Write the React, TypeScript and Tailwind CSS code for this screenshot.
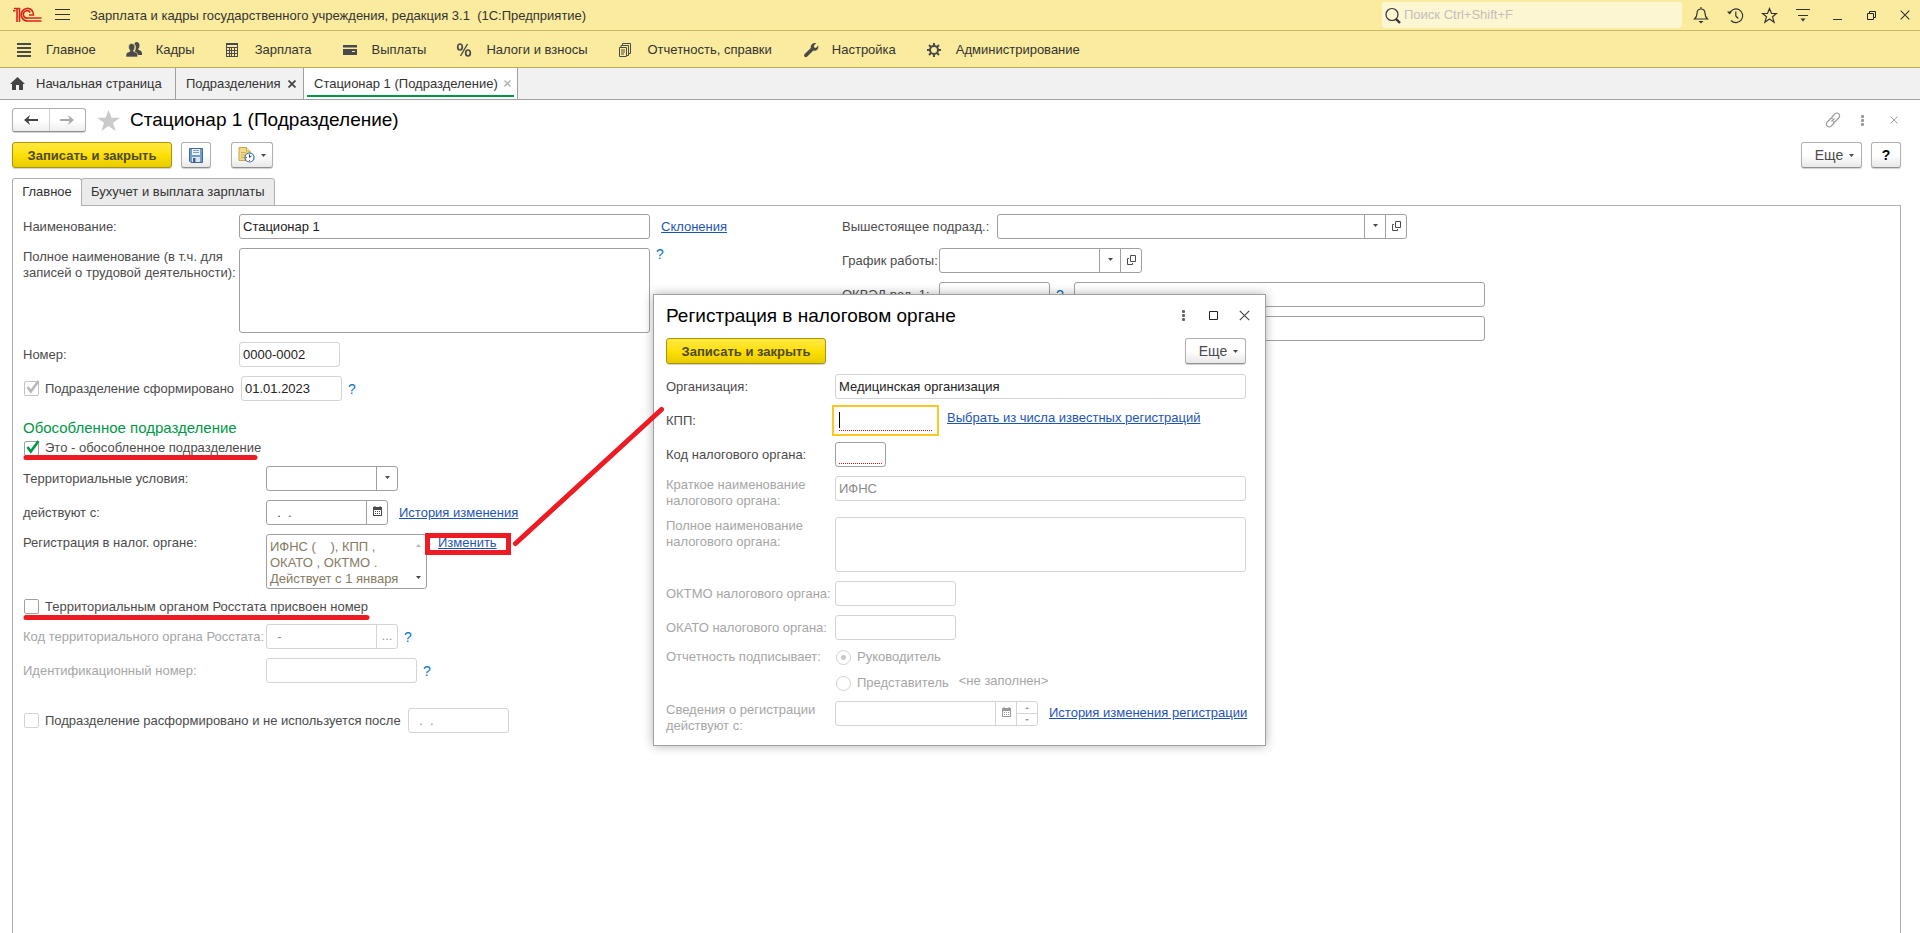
import React from 'react';

const SECTIONS = [
    { label: 'Главное', icon: 'lines' },
    { label: 'Кадры', icon: 'people' },
    { label: 'Зарплата', icon: 'calc' },
    { label: 'Выплаты', icon: 'card' },
    { label: 'Налоги и взносы', icon: 'percent' },
    { label: 'Отчетность, справки', icon: 'docs' },
    { label: 'Настройка', icon: 'wrench' },
    { label: 'Администрирование', icon: 'gear' },
];

const SectionIcon: React.FC<{ name: string }> = ({ name }) => (
    <svg width="18" height="18" viewBox="0 0 18 18" fill="#4a4a4a" className="shrink-0">
        {name === 'lines' && <path d="M1 2h14v2H1zM1 6h14v2H1zM1 10h14v2H1zM1 14h14v2H1z" />}
        {name === 'people' && (
            <>
                <path d="M10.500 1c2 0 3 1.400 3 3.400 0 1.600-.6 2.600-1.200 3.300v1c1.500.7 3.700 1.200 3.700 3.300v2h-4.500c-.6-1.800-2-2.500-3.300-3 1.200-1.200 1.600-2.600 1.600-4.400 0-1.500-.5-2.700-1.500-3.600.5-1.200 1.200-2 2.200-2z" />
                <path d="M5.700 2.500c2 0 3.200 1.400 3.200 3.500 0 1.600-.6 2.700-1.300 3.400v1c1.500.7 4.100 1.100 4.100 3.400V16H0v-2.200c0-2.300 2.400-2.700 3.900-3.400v-1C3.200 8.700 2.600 7.600 2.600 6c0-2.100 1.100-3.500 3.100-3.500z" stroke="#fbeb9e" strokeWidth=".6" />
            </>
        )}
        {name === 'calc' && (
            <path fillRule="evenodd" d="M1 2h12v14H1zM2 4v2h10V4zM2 7v2h2V7zM5 7v2h1V7zM7 7v2h2V7zM10 7v2h2V7zM2 10v2h2v-2zM5 10v2h1v-2zM7 10v2h2v-2zM10 10v2h2v-2zM2 13v2h2v-2zM5 13v2h1v-2zM7 13v2h2v-2zM10 13v2h2v-2z" />
        )}
        {name === 'card' && <path d="M1 4h14v2.500H1zM1 8h14v6H1zM10 10v1h3v-1z" fillRule="evenodd" />}
        {name === 'percent' && (
            <g fill="none" stroke="#4a4a4a">
                <ellipse cx="4" cy="6" rx="2.300" ry="3" strokeWidth="1.700" />
                <ellipse cx="12" cy="12" rx="2.300" ry="3" strokeWidth="1.700" />
                <path d="M11.500 3l-7 12" strokeWidth="1.400" />
            </g>
        )}
        {name === 'docs' && (
            <g fill="none" stroke="#4a4a4a">
                <path d="M4.500 4.500V2.500h8v10h-1.500M3 6V4.500h7.500v10H9" />
                <path d="M1.500 6.500h7v9h-7zM3 9h4M3 11h4M3 13h3" />
            </g>
        )}
        {name === 'wrench' && (
            <path d="M11.500 2.200c1-.3 2-.2 2.600.1L11.800 4.700l.4 1.800 1.800.4 2.100-2.300c.5 1.400.2 3.100-.9 4.100-1.100 1-2.600 1.200-3.800.7L5.300 15.600c-.8.8-2 .9-2.700.2-.8-.8-.7-1.900.1-2.700L8.800 7C8.300 4.800 9.500 2.700 11.500 2.200z" />
        )}
        {name === 'gear' && (
            <g fill="none" stroke="#4a4a4a">
                <circle cx="8" cy="9" r="4" strokeWidth="2" />
                <path d="M8 2v3M8 13v3M1 9h3M12 9h3M3 4l2 2M11 12l2 2M13 4l-2 2M5 12l-2 2" strokeWidth="2" />
            </g>
        )}
    </svg>
);

const Logo = () => (
    <svg width="30" height="16" viewBox="0 0 30 16" fill="none" stroke="#d9251d" aria-label="1С">
        <path d="M1 3.700h2.500M5 1v14M7.500 1v14M2 1.500h6" strokeWidth="1.600" />
        <path d="M20.500 3.800A6.300 6.300 0 1 0 15.800 14h13.700" strokeWidth="1.600" />
        <path d="M18.300 5.500A3.700 3.700 0 1 0 15.800 11h13.700" strokeWidth="1.600" />
        <path d="M17 8h4.500c0-2-.6-3.400-1.500-4.500" strokeWidth="1.500" />
    </svg>
);

const Caret = ({ className = '' }: { className?: string }) => (
    <svg width="5" height="3" viewBox="0 0 5 3" fill="currentColor" className={className}>
        <path d="M0 0h5L2.500 3z" />
    </svg>
);

const OpenIcon = () => (
    <svg width="9" height="10" viewBox="0 0 9 10" fill="none" stroke="#4a4a4a">
        <path d="M3.500.5h5v6h-5zM2 3.500H.5v6h5V8" />
    </svg>
);

const CalendarIcon = ({ className = '' }: { className?: string }) => (
    <svg width="9" height="11" viewBox="0 0 9 11" fill="currentColor" className={className}>
        <path fillRule="evenodd" d="M0 1h1.500V0h1v1h4V0h1v1H9v9H0zM1 4v5h7V4zM2 5h1v1H2zM4 5h1v1H4zM6 5h1v1H6zM2 7h1v1H2zM4 7h1v1H4zM6 7h1v1H6z" />
    </svg>
);

const Dots = ({ className = '' }: { className?: string }) => (
    <svg width="3" height="11" viewBox="0 0 3 11" fill="currentColor" className={className}>
        <rect width="3" height="3" rx="1" />
        <rect y="4" width="3" height="3" rx="1" />
        <rect y="8" width="3" height="3" rx="1" />
    </svg>
);

const Cross = ({ size, className = '', width = 1.2 }: { size: number; className?: string; width?: number }) => (
    <svg width={size} height={size} viewBox="0 0 10 10" stroke="currentColor" strokeWidth={width} className={className}>
        <path d="M.7.7l8.600 8.600M9.300.7L.7 9.300" />
    </svg>
);

const inputBase = 'h-[25px] rounded-[3px] border bg-white px-[3px] outline-none';
const greyButton =
    'h-[26px] rounded-[3px] border border-[#b0b0b0] border-b-[#8f8f8f] bg-gradient-to-b from-white from-50% to-[#e8e8e8] shadow-[0_1px_1px_#d0d0d0] flex items-center justify-center';
const yellowButton =
    'h-[26px] w-40 rounded-[3px] border border-[#a8940a] bg-gradient-to-b from-[#ffe83c] via-[#ffe000] to-[#e8cb00] pt-px text-[13px] font-bold text-[#4d4a2a] shadow-[0_1px_1px_#d0d0d0]';
const link = 'whitespace-nowrap text-[#1e55b5] underline underline-offset-1';

const Help = ({ className = '' }: { className?: string }) => (
    <button type="button" aria-label="Справка" className={`text-sm leading-3 text-[#0a74c0] ${className}`}>?</button>
);

interface CheckProps {
    id: string;
    label: string;
    checked?: boolean;
    disabled?: boolean;
    boxClass?: string;
}

const Check: React.FC<CheckProps> = ({ id, label, checked = false, disabled = false, boxClass = 'border-[#a0a0a0]' }) => (
    <div className="flex items-center gap-1.5">
        <span className="relative flex">
            <input
                id={id}
                type="checkbox"
                defaultChecked={checked}
                disabled={disabled}
                className={`ml-px size-[15px] appearance-none rounded-[2px] border bg-white ${boxClass}`}
            />
            {checked && (
                <svg width="16" height="16" viewBox="0 0 16 16" fill="none" className={`pointer-events-none absolute -top-px left-px ${disabled ? 'text-[#b8b8b8]' : 'text-[#009846]'}`}>
                    <path d="M3.500 7l3.300 4.500L14.500 1" stroke="currentColor" strokeWidth="2.600" />
                </svg>
            )}
        </span>
        <label htmlFor={id}>{label}</label>
    </div>
);

interface RowProps {
    id: string;
    label: React.ReactNode;
    labelWidth?: string;
    muted?: boolean;
    top?: boolean;
    children: React.ReactNode;
}

const Row: React.FC<RowProps> = ({ id, label, labelWidth = '', muted = false, top = false, children }) => (
    <div className={`flex ${top ? 'items-start' : 'items-center'}`}>
        <label htmlFor={id} className={`shrink-0 whitespace-nowrap ${labelWidth} ${top ? '-mb-px pt-px' : ''} ${muted ? 'text-[#a6a6a6]' : ''}`}>{label}</label>
        {children}
    </div>
);

interface ComboProps {
    id: string;
    width: string;
    value?: string;
    muted?: boolean;
    buttons: { label: string; icon: React.ReactNode }[];
}

// text box with a strip of buttons on its right edge
const Combo: React.FC<ComboProps> = ({ id, width, value = '', muted = false, buttons }) => (
    <div className={`flex h-[25px] overflow-hidden rounded-[3px] border bg-white ${width} ${muted ? 'border-[#d4d4d4] text-[#8a8a8a]' : 'border-[#a0a0a0]'}`}>
        <input id={id} defaultValue={value} disabled={muted} className="min-w-0 flex-1 px-[3px] outline-none" />
        {buttons.map((b) => (
            <button
                key={b.label}
                type="button"
                aria-label={b.label}
                className={`flex w-[21px] items-center justify-center border-l pb-0.5 text-[#4a4a4a] ${muted ? 'border-[#d4d4d4]' : 'border-[#a0a0a0]'}`}
            >
                {b.icon}
            </button>
        ))}
    </div>
);

const TitleBar = () => (
    <header className="flex h-[31px] items-center border-b border-[#c9b96a] bg-[#fbeb9e] text-[#333]">
        <div className="ml-3 flex w-[43px]"><Logo /></div>
        <button type="button" aria-label="Меню" className="mr-5">
            <svg width="15" height="12" viewBox="0 0 15 12" stroke="#333"><path d="M0 .5h15M0 5.500h15M0 10.500h15" /></svg>
        </button>
        <h1 className="flex-1 whitespace-pre pt-px">Зарплата и кадры государственного учреждения, редакция 3.1  (1С:Предприятие)</h1>
        <label className="flex h-[26px] w-[300px] items-center rounded-[3px] bg-[#fdf6d3] pl-[3px]">
            <svg width="16" height="17" viewBox="0 0 16 17" fill="none" stroke="#333">
                <circle cx="7" cy="7.500" r="6" strokeWidth="1.200" />
                <path d="M11 12l4 4" strokeWidth="2.400" />
            </svg>
            <input placeholder="Поиск Ctrl+Shift+F" aria-label="Поиск" className="ml-[3px] min-w-0 flex-1 outline-none placeholder:text-[#c4c0b8]" />
        </label>
        <div className="flex [&>button]:flex [&>button]:h-6 [&>button]:w-[34px] [&>button]:items-center [&>button]:justify-center [&>button]:pl-1">
            <button type="button" aria-label="Уведомления">
                <svg width="16" height="18" viewBox="0 0 16 18" fill="none" stroke="#333">
                    <path d="M1.500 13C3.500 11 4 9.500 4 7.500 4 4.800 5.500 3 8 3s4 1.800 4 4.500c0 2 .5 3.500 2.500 5.500zM8 3V1" strokeWidth="1.200" />
                    <path d="M5.500 15h5L8 17.500z" fill="#333" stroke="none" />
                </svg>
            </button>
            <button type="button" aria-label="История">
                <svg width="17" height="17" viewBox="0 0 17 17" fill="none" stroke="#333" strokeWidth="1.200">
                    <path d="M2.500 6.500A6.800 6.800 0 1 1 4 13.500M8.800 4.500v4.500l2.500 2.500" />
                    <path d="M0 4.500l2.600 3L5 4.500z" fill="#333" stroke="none" />
                </svg>
            </button>
            <button type="button" aria-label="Избранное">
                <svg width="17" height="17" viewBox="0 0 17 17" fill="none" stroke="#333" strokeWidth="1.200">
                    <path d="M8.500 1.500l2 5h5l-4 3.300 1.600 5.400-4.600-3.200-4.600 3.200 1.600-5.400-4-3.300h5z" />
                </svg>
            </button>
            <button type="button" aria-label="Настройки">
                <svg width="14" height="14" viewBox="0 0 14 14" stroke="#333"><path d="M0 1.500h14M2 7.500h10" strokeWidth="1.200" /><path d="M4.500 10.500h5l-2.500 3z" fill="#333" stroke="none" /></svg>
            </button>
            <button type="button" aria-label="Свернуть">
                <svg width="9" height="9" viewBox="0 0 9 9" stroke="#333"><path d="M0 8.500h9" /></svg>
            </button>
            <button type="button" aria-label="Восстановить">
                <svg width="9" height="9" viewBox="0 0 9 9" fill="none" stroke="#222"><path d="M.5 2.500h6v6h-6zM2.500 2V.5h6v6H7" /></svg>
            </button>
            <button type="button" aria-label="Закрыть"><Cross size={10} width={1.1} /></button>
        </div>
    </header>
);

const SectionBar = () => (
    <nav className="flex h-[37px] items-center gap-[30px] border-b border-[#b9ad5a] bg-[#fbeb9e] pl-4 pt-0.5 text-[#333]">
        {SECTIONS.map((s) => (
            <a key={s.label} href="#" className="flex items-center gap-3 whitespace-nowrap">
                <SectionIcon name={s.icon} />
                {s.label}
            </a>
        ))}
    </nav>
);

const OpenTabs = () => (
    <nav className="flex h-8 border-b border-[#a0a0a0] bg-[#f1f1f1] text-[#333]">
        <a href="#" className="flex w-44 items-center gap-[11px] border-r border-[#a0a0a0] pl-2.5">
            <svg width="15" height="13" viewBox="0 0 15 13" fill="#444"><path d="M7.500 0L15 7h-2v6H9V8H6v5H2V7H0z" /></svg>
            Начальная страница
        </a>
        <div className="flex w-32 items-center justify-between border-r border-[#a0a0a0] pl-2.5 pr-[7px]">
            <a href="#">Подразделения</a>
            <button type="button" aria-label="Закрыть вкладку"><Cross size={8} width={2.2} className="text-[#444]" /></button>
        </div>
        <div className="flex w-[214px] border-r border-[#a0a0a0] bg-white px-[3px] pb-0.5">
            <div className="flex flex-1 items-center justify-between border-b-2 border-[#009846] pl-[7px] pr-[3px] pt-1">
                <a href="#">Стационар 1 (Подразделение)</a>
                <button type="button" aria-label="Закрыть вкладку"><Cross size={7} width={2} className="text-[#b0b0b0]" /></button>
            </div>
        </div>
    </nav>
);

const FormHeader = () => (
    <div className="pl-3 pr-[19px]">
        <div className="flex h-6 items-center">
            <div className="flex h-6 w-[74px] rounded-[3px] border border-[#b0b0b0] border-b-[#8f8f8f] bg-gradient-to-b from-white from-50% to-[#eee] shadow-[0_1px_1px_#d0d0d0]">
                <button type="button" aria-label="Назад" className="flex flex-1 items-center justify-center border-r border-[#d0d0d0]">
                    <svg width="14" height="10" viewBox="0 0 14 10" fill="#444"><path d="M0 5l6-5-1.500 4H14v2H4.500L6 10z" /></svg>
                </button>
                <button type="button" aria-label="Вперед" className="flex flex-1 items-center justify-center">
                    <svg width="14" height="10" viewBox="0 0 14 10" fill="#aaa"><path d="M14 5L8 0l1.500 4H0v2h9.500L8 10z" /></svg>
                </button>
            </div>
            <button type="button" aria-label="В избранное" className="ml-[11px] mr-2.5">
                <svg width="23" height="21" viewBox="0 0 23 21" fill="#c9cacc"><path d="M11.500 0l3 7.800H23l-7 4.900 2.600 8.300-7.100-5-7.100 5L7 12.700 0 7.800h8.500z" /></svg>
            </button>
            <h2 className="flex-1 text-[19px] leading-6 text-black">Стационар 1 (Подразделение)</h2>
            <div className="flex items-center gap-5 pr-[3px] text-[#999]">
                <svg width="16" height="16" viewBox="0 0 16 16" fill="none" stroke="#999" strokeWidth="1.200">
                    <path d="M6.500 5.500l3.300-3.600c1.200-1.200 3-1.200 4 0 1.100 1 1.100 2.700 0 3.900l-3 3.200c-.8.8-1.800 1-2.700.7M9.500 10.500l-3.300 3.600c-1.200 1.200-3 1.200-4 0-1.100-1-1.100-2.700 0-3.900l3-3.200c.8-.8 1.800-1 2.700-.7M6.500 9.500l3-3" />
                </svg>
                <button type="button" aria-label="Действия"><Dots /></button>
                <button type="button" aria-label="Закрыть форму" className="pl-1.5"><Cross size={8} /></button>
            </div>
        </div>

        <div className="mt-2.5 flex items-center">
            <button type="button" className={yellowButton}>Записать и закрыть</button>
            <button type="button" aria-label="Записать" className={`ml-[9px] w-[30px] ${greyButton}`}>
                <svg width="14" height="15" viewBox="0 0 14 15">
                    <path d="M.5.5h13v14H2L.5 13z" fill="#6f9fd0" stroke="#3f6690" />
                    <path d="M3 1h8v6H3z" fill="#eef4fa" />
                    <path d="M4 2.500h6M4 4.500h6" stroke="#7c9fc4" />
                    <path d="M3 9h8v5H3z" fill="#dfe5ea" />
                    <path d="M4 10h2.500v4H4z" fill="#3f6690" />
                </svg>
            </button>
            <button type="button" aria-label="Напоминание" className={`ml-5 w-[42px] gap-1.5 text-[#4a4a4a] ${greyButton}`}>
                <svg width="17" height="16" viewBox="0 0 17 16">
                    <path d="M1 .5h7.500L12 4v9.500H1z" fill="#f3d98a" stroke="#c9a84d" />
                    <path d="M8.500.5V4H12" fill="#fff3c4" stroke="#c9a84d" />
                    <path d="M3 5.500h5M3 8h4M3 10.500h3" stroke="#cfae58" />
                    <circle cx="11.500" cy="10.500" r="4.500" fill="#fff" stroke="#2d6da8" strokeWidth="1.200" />
                    <path d="M11.500 7.500v3l2-1.500" stroke="#1b4f83" fill="none" />
                    <path d="M11.500 14v-1M8 10.500h1" stroke="#d33" />
                </svg>
                <Caret />
            </button>
            <button type="button" className={`ml-auto w-[61px] gap-1.5 pl-1.5 text-sm text-[#4a4a4a] ${greyButton}`}>
                Еще <Caret />
            </button>
            <button type="button" className={`ml-[9px] w-[30px] text-sm font-bold text-black ${greyButton}`}>?</button>
        </div>
    </div>
);

const caretButton = { label: 'Выбрать', icon: <Caret /> };
const openButton = { label: 'Открыть', icon: <OpenIcon /> };

const LeftColumn = () => (
    <div className="flex w-[819px] shrink-0 flex-col gap-[9px]">
        <Row id="name" label="Наименование:" labelWidth="w-[216px]">
            <input id="name" defaultValue="Стационар 1" className={`${inputBase} w-[411px] border-[#a0a0a0] text-[#222]`} />
            <a href="#" className={`ml-[11px] ${link}`}>Склонения</a>
        </Row>
        <Row id="full" label={<>Полное наименование (в т.ч. для<br />записей о трудовой деятельности):</>} labelWidth="w-[216px]" top>
            <textarea id="full" className="h-[85px] w-[411px] resize-none rounded-[3px] border border-[#a0a0a0] px-[3px] outline-none" />
            <Help className="ml-1.5" />
        </Row>
        <Row id="number" label="Номер:" labelWidth="w-[216px]">
            <input id="number" readOnly value="0000-0002" className={`${inputBase} w-[101px] border-[#d4d4d4] text-[#222]`} />
        </Row>
        <div className="flex items-center">
            <div className="w-[218px]"><Check id="formed" label="Подразделение сформировано" checked disabled boxClass="border-[#c4c4c4]" /></div>
            <input aria-label="Дата формирования" readOnly value="01.01.2023" className={`${inputBase} w-[101px] border-[#d4d4d4] text-[#222]`} />
            <Help className="ml-1.5" />
        </div>
        <section className="-mb-px pt-2">
            <h3 className="text-[15px] leading-5 text-[#009846]">Обособленное подразделение</h3>
            <div className="flex h-5 items-center"><Check id="separate" label="Это - обособленное подразделение" checked /></div>
        </section>
        <Row id="terr" label="Территориальные условия:" labelWidth="w-[243px]">
            <Combo id="terr" width="w-[132px]" buttons={[caretButton]} />
        </Row>
        <Row id="from" label="действуют с:" labelWidth="w-[243px]">
            <Combo id="from" width="w-[122px]" value="  .  ." buttons={[{ label: 'Календарь', icon: <CalendarIcon /> }]} />
            <a href="#" className={`ml-[11px] ${link}`}>История изменения</a>
        </Row>
        <Row id="reg" label="Регистрация в налог. органе:" labelWidth="w-[243px]" top>
            <div className="flex h-[55px] w-[161px] rounded-[3px] border border-[#a0a0a0]">
                <textarea
                    id="reg"
                    readOnly
                    value={'ИФНС (    ), КПП ,\nОКАТО , ОКТМО .\nДействует с 1 января'}
                    className="min-w-0 flex-1 resize-none overflow-hidden pl-[3px] pt-1 text-[#857b62] outline-none"
                />
                <div className="flex w-4 flex-col items-center justify-between py-[9px] text-[#444]">
                    <Caret className="rotate-180 text-[#bbb]" />
                    <Caret />
                </div>
            </div>
            <a href="#" className={`ml-[11px] mt-px ${link}`}>Изменить</a>
        </Row>
        <div className="flex h-[17px] items-center"><Check id="rosstat" label="Территориальным органом Росстата присвоен номер" /></div>
        <Row id="code" label="Код территориального органа Росстата:" labelWidth="w-[243px]" muted>
            <Combo id="code" width="w-[132px]" value="  -" muted buttons={[{ label: 'Выбрать', icon: <span className="text-[#999]">...</span> }]} />
            <Help className="ml-1.5" />
        </Row>
        <Row id="ident" label="Идентификационный номер:" labelWidth="w-[243px]" muted>
            <input id="ident" disabled className={`${inputBase} w-[151px] border-[#d4d4d4]`} />
            <Help className="ml-1.5" />
        </Row>
        <div className="mt-4 flex items-center">
            <div className="w-[385px]"><Check id="closed" label="Подразделение расформировано и не используется после" boxClass="border-[#d4d4d4]" /></div>
            <input aria-label="Дата расформирования" defaultValue="  .  ." className={`${inputBase} w-[101px] border-[#d4d4d4] text-[#888]`} />
        </div>
    </div>
);

const RightColumn = () => (
    <div className="flex flex-1 flex-col gap-[9px]">
        <Row id="parent" label="Вышестоящее подразд.:" labelWidth="w-[155px]">
            <Combo id="parent" width="w-[410px]" buttons={[caretButton, openButton]} />
        </Row>
        <Row id="schedule" label="График работы:" labelWidth="w-[97px]">
            <Combo id="schedule" width="w-[203px]" buttons={[caretButton, openButton]} />
        </Row>
        <Row id="okved" label="ОКВЭД ред. 1:" labelWidth="w-[97px]">
            <input id="okved" className={`${inputBase} w-[111px] border-[#a0a0a0]`} />
            <Help className="ml-1.5 w-[18px] text-left" />
            <input aria-label="Расшифровка ОКВЭД" className={`${inputBase} w-[411px] border-[#a0a0a0]`} />
        </Row>
        <div className="flex pl-[232px]">
            <input aria-label="Расшифровка ОКВЭД, вторая строка" className={`${inputBase} w-[411px] border-[#a0a0a0]`} />
        </div>
    </div>
);

const TaxDialog = () => (
    <div role="dialog" aria-label="Регистрация в налоговом органе" className="absolute left-[653px] top-[294px] w-[613px] border border-[#a0a0a0] bg-white pb-3 pl-3 pr-[19px] shadow-[0_0_10px_rgba(0,0,0,0.3)]">
        <div className="flex h-[43px] items-center pb-0.5">
            <h2 className="flex-1 text-[19px] leading-6 text-black">Регистрация в налоговом органе</h2>
            <div className="flex items-center text-[#444]">
                <button type="button" aria-label="Действия" className="mr-6 text-[#666]"><Dots /></button>
                <button type="button" aria-label="Развернуть" className="mr-5">
                    <svg width="10" height="9" viewBox="0 0 10 9" fill="none" stroke="#222"><path d="M.5.5h8v8h-8z" /></svg>
                </button>
                <button type="button" aria-label="Закрыть" className="-mr-1"><Cross size={11} width={1} /></button>
            </div>
        </div>
        <div className="mb-2.5 flex justify-between">
            <button type="button" className={yellowButton}>Записать и закрыть</button>
            <button type="button" className={`w-[61px] gap-1.5 pl-1.5 text-sm text-[#4a4a4a] ${greyButton}`}>Еще <Caret /></button>
        </div>
        <div className="flex flex-col gap-[9px]">
            <Row id="org" label="Организация:" labelWidth="w-[169px]">
                <input id="org" readOnly value="Медицинская организация" className={`${inputBase} flex-1 border-[#d4d4d4] text-[#222]`} />
            </Row>
            <Row id="kpp" label="КПП:" labelWidth="w-[169px]">
                <div className="-my-[3px] -ml-[3px] h-[31px] w-[107px] border-2 border-[#fcc623] px-[5px] pt-[5px]">
                    <div className="flex h-[19px] w-[93px] items-start border-b border-dotted border-[#d01c1c]">
                        <span className="h-4 w-px bg-black" />
                        <input id="kpp" className="min-w-0 flex-1 outline-none" />
                    </div>
                </div>
                <a href="#" className={`mb-1.5 ml-2 ${link}`}>Выбрать из числа известных регистраций</a>
            </Row>
            <Row id="taxcode" label="Код налогового органа:" labelWidth="w-[169px]">
                <div className="h-[25px] w-[51px] rounded-[3px] border border-[#a0a0a0] px-[3px]">
                    <input id="taxcode" className="block h-[21px] w-full border-b border-dotted border-[#d01c1c] outline-none" />
                </div>
            </Row>
            <Row id="short" label={<>Краткое наименование<br />налогового органа:</>} labelWidth="w-[169px]" muted top>
                <input id="short" disabled value="ИФНС" className={`${inputBase} mb-[7px] flex-1 border-[#d4d4d4] text-[#8a8a8a]`} />
            </Row>
            <Row id="long" label={<>Полное наименование<br />налогового органа:</>} labelWidth="w-[169px]" muted top>
                <textarea id="long" disabled className="h-[55px] flex-1 resize-none rounded-[3px] border border-[#d4d4d4]" />
            </Row>
            <Row id="oktmo" label="ОКТМО налогового органа:" labelWidth="w-[169px]" muted>
                <input id="oktmo" disabled className={`${inputBase} w-[121px] border-[#d4d4d4]`} />
            </Row>
            <Row id="okato" label="ОКАТО налогового органа:" labelWidth="w-[169px]" muted>
                <input id="okato" disabled className={`${inputBase} w-[121px] border-[#d4d4d4]`} />
            </Row>
            <fieldset className="flex pb-px text-[#a6a6a6]">
                <legend className="float-left w-[169px]">Отчетность подписывает:</legend>
                <div className="flex flex-col gap-2.5">
                    {['Руководитель', 'Представитель'].map((name, i) => (
                        <div key={name} className="flex h-4 items-center gap-1.5">
                            <input
                                id={`signer${i}`}
                                type="radio"
                                name="signer"
                                disabled
                                defaultChecked={i === 0}
                                className="ml-px size-[15px] appearance-none rounded-full border border-[#d0d0d0] checked:bg-[radial-gradient(#c8c8c8_0_2px,transparent_3px)]"
                            />
                            <label htmlFor={`signer${i}`}>{name}</label>
                            {i === 1 && <span className="mb-1 ml-1">&lt;не заполнен&gt;</span>}
                        </div>
                    ))}
                </div>
            </fieldset>
            <Row id="info" label={<>Сведения о регистрации<br />действуют с:</>} labelWidth="w-[169px]" muted top>
                <div className="flex h-[25px] w-[203px] rounded-[3px] border border-[#d4d4d4] text-[#999]">
                    <input id="info" disabled className="min-w-0 flex-1" />
                    <button type="button" aria-label="Календарь" className="flex w-[21px] items-center justify-center border-l border-[#d4d4d4] pb-0.5"><CalendarIcon /></button>
                    <span className="flex w-[21px] flex-col border-l border-[#d4d4d4]">
                        <button type="button" aria-label="Больше" className="flex flex-1 items-center justify-center border-b border-[#d4d4d4]">
                            <svg width="4" height="2" viewBox="0 0 4 2" fill="currentColor"><path d="M0 2h4L2 0z" /></svg>
                        </button>
                        <button type="button" aria-label="Меньше" className="flex flex-1 items-center justify-center">
                            <svg width="4" height="2" viewBox="0 0 4 2" fill="currentColor"><path d="M0 0h4L2 2z" /></svg>
                        </button>
                    </span>
                </div>
                <a href="#" className={`ml-[11px] mt-1 ${link}`}>История изменения регистрации</a>
            </Row>
        </div>
    </div>
);

// red pen marks drawn over the form
const Marks = () => (
    <svg width="680" height="640" viewBox="0 0 680 640" fill="none" stroke="#ed1c24" className="pointer-events-none absolute left-0 top-0">
        <path d="M26 457.500h229M26 617.500h341" strokeWidth="5" strokeLinecap="round" />
        <path d="M427.500 535.500h81v17h-81z" strokeWidth="5" />
        <path d="M515.500 543.500L661.500 409.500" strokeWidth="5" strokeLinecap="round" />
    </svg>
);

const App: React.FC = () => {
    return (
        <div className="relative flex min-h-screen flex-col bg-white font-['Liberation_Sans',Arial,sans-serif] text-[13px] leading-4 text-[#4b4b4b]">
            <TitleBar />
            <SectionBar />
            <OpenTabs />
            <main className="flex flex-1 flex-col pt-2">
                <FormHeader />
                <div className="relative mt-2.5 ml-3 flex h-7 text-[#333]">
                    <button type="button" className="relative w-[70px] rounded-t-[3px] border border-b-0 border-[#b0b0b0] bg-white pb-0.5">Главное</button>
                    <button type="button" className="-ml-px rounded-t-[3px] border border-[#b0b0b0] bg-[#ebebeb] px-[9px] pb-px">Бухучет и выплата зарплаты</button>
                </div>
                <div className="-mt-px ml-3 mr-[19px] flex flex-1 border border-b-0 border-[#b0b0b0] pl-2.5 pt-2">
                    <LeftColumn />
                    <RightColumn />
                </div>
            </main>
            <TaxDialog />
            <Marks />
        </div>
    );
};

export default App;
